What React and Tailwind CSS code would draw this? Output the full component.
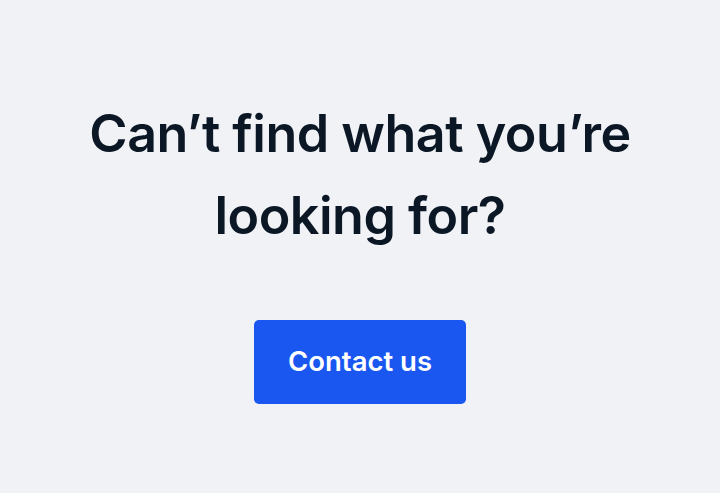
export default function App() {
  return (
    <div className="min-h-screen w-full bg-[#f0f2f5] flex flex-col items-center pt-[93px] font-['Inter',sans-serif]">
      <h2 className="text-center text-[52px] leading-[82px] font-semibold tracking-[-0.5px] text-[#0c1726]">
        Can’t find what you’re
        <br />
        looking for?
      </h2>
      <button className="mt-[63px] w-[212px] h-[84px] rounded-[5px] bg-[#1a56f0] text-white text-[27.5px] font-semibold">
        Contact us
      </button>
    </div>
  );
}
